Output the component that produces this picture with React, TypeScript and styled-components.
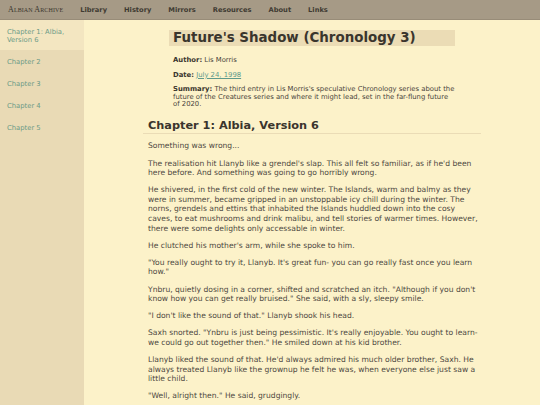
import styled, { createGlobalStyle } from "styled-components"

const GlobalStyle = createGlobalStyle`
  html, body {
    margin:0;
    padding:0;
    background:#fcf2c9;
    font-family:"DejaVu Sans", Verdana, sans-serif;
    color:#46413a;
  }
`

const Page = styled.div`
  height:100vh;
  display:flex;
  flex-direction:column;
  overflow:hidden;
`
const NavBar = styled.nav`
  height:20px;
  flex:none;
  background:#a69a86;
  border-bottom:1px solid #988c78;
  display:flex;
  align-items:center;
  padding:0 8px;
  gap:17px;
  box-sizing:border-box;
`
const Brand = styled.div`
  font-family:"Liberation Serif", "DejaVu Serif", serif;
  font-variant:small-caps;
  font-size:8px;
  color:#3b362e;
  letter-spacing:0.1px;
`
const NavItem = styled.a`
  font-size:6.7px;
  font-weight:bold;
  color:#3f3a32;
  text-decoration:none;
  cursor:pointer;
`
const Body = styled.div`
  flex:1;
  display:flex;
  min-height:0;
`
const Sidebar = styled.aside`
  width:84px;
  flex:none;
  background:#e9dab5;
  display:flex;
  flex-direction:column;
`
const SideLink = styled.a<{ $active?: boolean }>`
  display:block;
  padding:7.5px 7px 6.5px;
  font-size:6.8px;
  line-height:8px;
  color:#6c9b87;
  text-decoration:none;
  background:${p => (p.$active ? "#f3e6c1" : "transparent")};
`
const Main = styled.main`
  flex:1;
  padding-top:10px;
`
const Article = styled.article`
  width:338px;
  margin:0 auto;
`
const Header = styled.header`
  width:286px;
  margin:0 auto;
`
const Title = styled.h1`
  margin:0 0 11px;
  background:#ebdcb5;
  font-size:13.4px;
  line-height:16px;
  font-weight:bold;
  color:#3a352d;
  padding:0 4px;
`
const Meta = styled.p`
  margin:0 0 7px;
  padding:0 0 0 4px;
  font-size:6.85px;
  line-height:7.6px;
  color:#4a453c;

  b { color:#3a352d; }
  a { color:#5e9a8c; }
`
const ChapterHeading = styled.h2`
  margin:10px 0 0;
  padding:0 5px 1px;
  font-size:11.3px;
  line-height:13px;
  font-weight:bold;
  color:#3a352d;
  border-bottom:1px solid #eadcb6;
`
const Para = styled.p`
  margin:7.5px 0 0;
  padding:0 3px 0 5px;
  font-size:7.6px;
  line-height:9.6px;
  color:#4d483f;
`

const chapters = ["Chapter 1: Albia, Version 6", "Chapter 2", "Chapter 3", "Chapter 4", "Chapter 5"]
const navLinks = ["Library", "History", "Mirrors", "Resources", "About", "Links"]

const paragraphs = [
  "Something was wrong...",
  "The realisation hit Llanyb like a grendel's slap. This all felt so familiar, as if he'd been here before. And something was going to go horribly wrong.",
  "He shivered, in the first cold of the new winter. The Islands, warm and balmy as they were in summer, became gripped in an unstoppable icy chill during the winter. The norns, grendels and ettins that inhabited the Islands huddled down into the cosy caves, to eat mushrooms and drink malibu, and tell stories of warmer times. However, there were some delights only accessable in winter.",
  "He clutched his mother's arm, while she spoke to him.",
  "\"You really ought to try it, Llanyb. It's great fun- you can go really fast once you learn how.\"",
  "Ynbru, quietly dosing in a corner, shifted and scratched an itch. \"Although if you don't know how you can get really bruised.\" She said, with a sly, sleepy smile.",
  "\"I don't like the sound of that.\" Llanyb shook his head.",
  "Saxh snorted. \"Ynbru is just being pessimistic. It's really enjoyable. You ought to learn- we could go out together then.\" He smiled down at his kid brother.",
  "Llanyb liked the sound of that. He'd always admired his much older brother, Saxh. He always treated Llanyb like the grownup he felt he was, when everyone else just saw a little child.",
  "\"Well, alright then.\" He said, grudgingly.",
]

const App = () => {
  return (
    <Page>
      <GlobalStyle />
      <NavBar>
        <Brand>Albian Archive</Brand>
        {navLinks.map(l => (
          <NavItem key={l}>{l}</NavItem>
        ))}
      </NavBar>
      <Body>
        <Sidebar>
          {chapters.map((c, i) => (
            <SideLink key={c} $active={i === 0}>{c}</SideLink>
          ))}
        </Sidebar>
        <Main>
          <Article>
            <Header>
              <Title>Future's Shadow (Chronology 3)</Title>
              <Meta><b>Author:</b> Lis Morris</Meta>
              <Meta><b>Date:</b> <a href="#">July 24, 1998</a></Meta>
              <Meta>
                <b>Summary:</b> The third entry in Lis Morris's speculative Chronology series about the future of the Creatures series and where it might lead, set in the far-flung future of 2020.
              </Meta>
            </Header>
            <ChapterHeading>Chapter 1: Albia, Version 6</ChapterHeading>
            {paragraphs.map((p, i) => (
              <Para key={i}>{p}</Para>
            ))}
          </Article>
        </Main>
      </Body>
    </Page>
  )
}

export default App
